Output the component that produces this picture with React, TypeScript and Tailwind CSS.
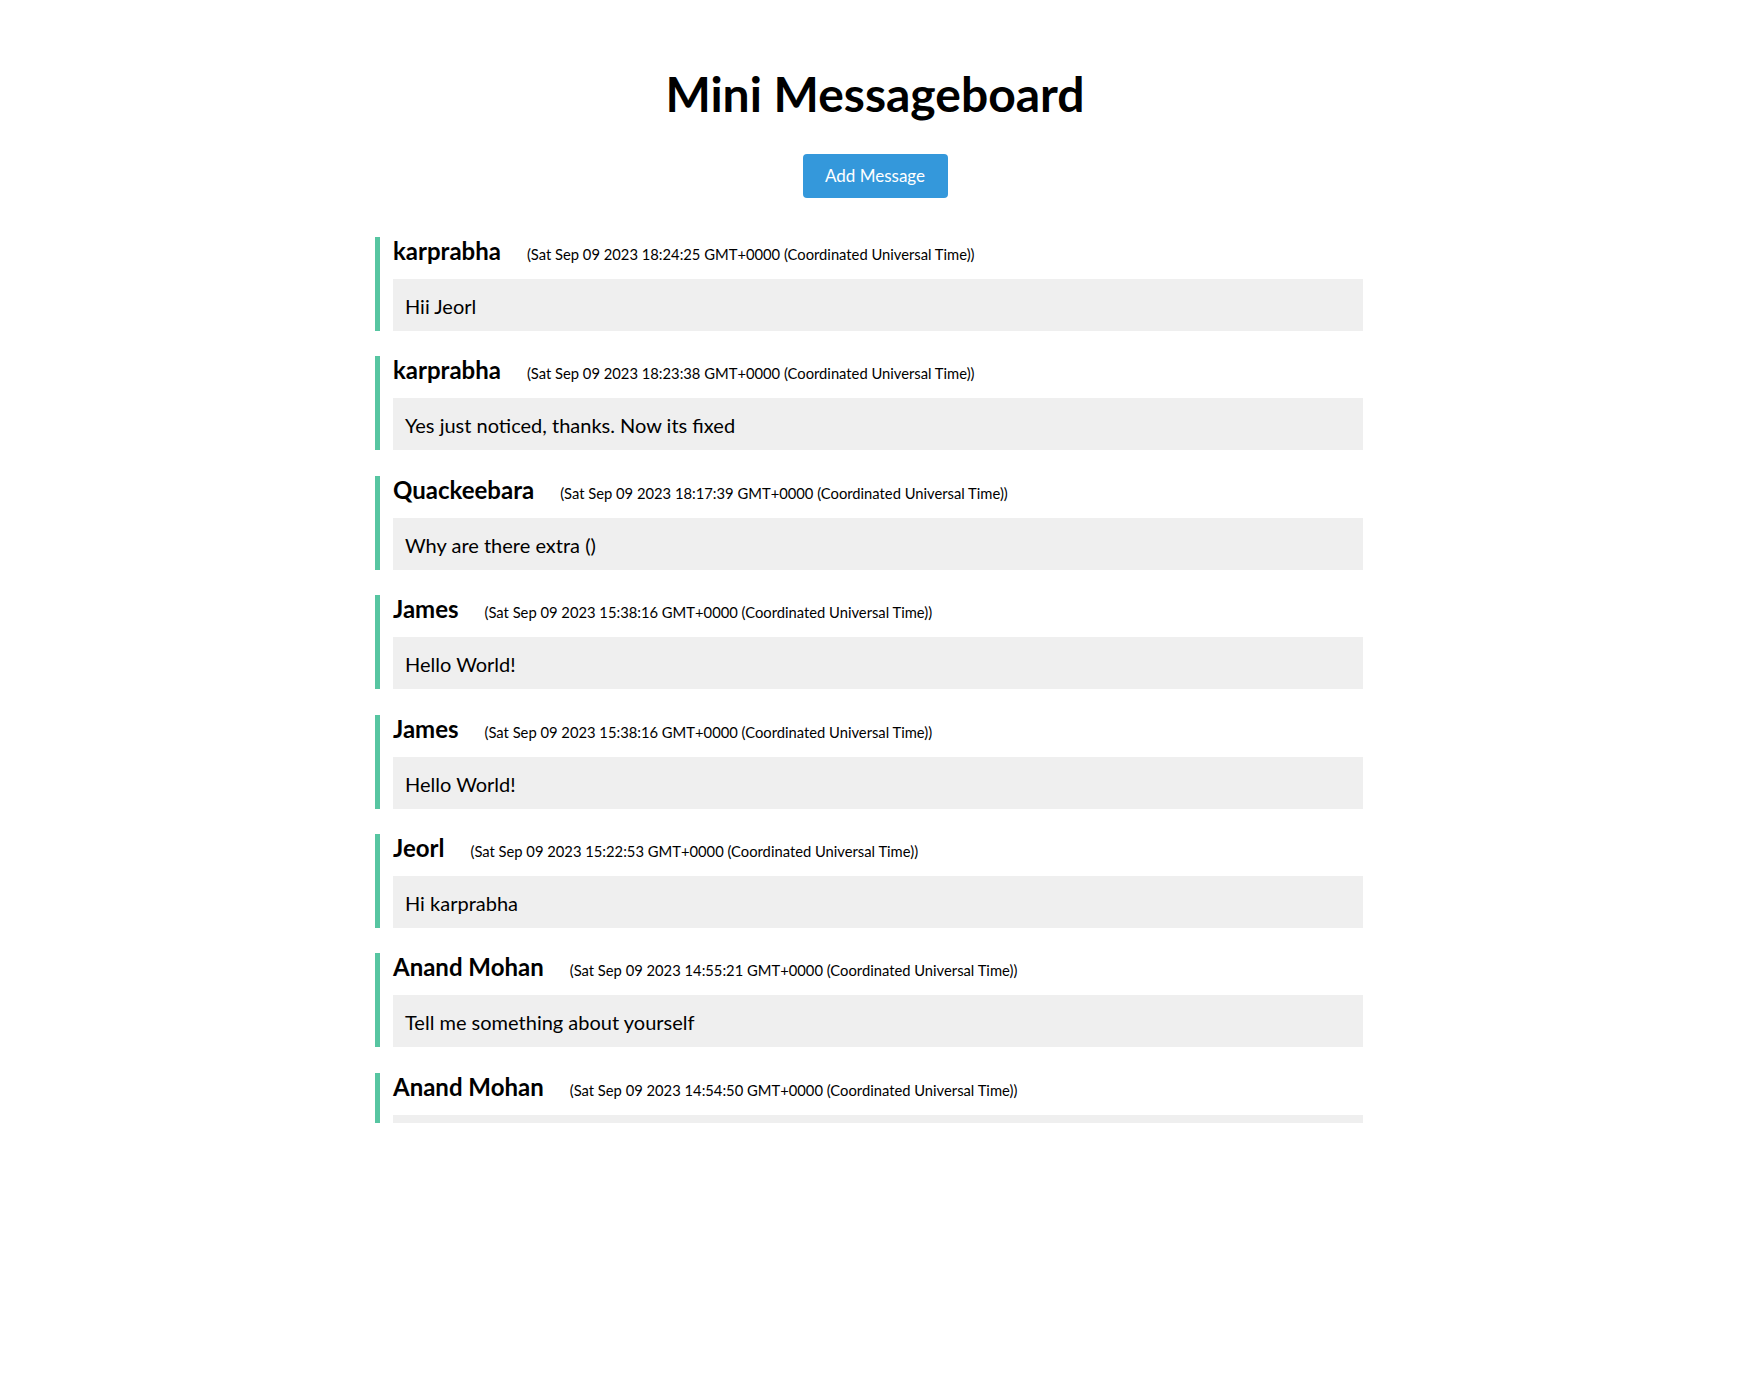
type Message = {
    user: string;
    time: string;
    text: string;
};

const messages: Message[] = [
    { user: 'karprabha', time: '18:24:25', text: 'Hii Jeorl' },
    { user: 'karprabha', time: '18:23:38', text: 'Yes just noticed, thanks. Now its fixed' },
    { user: 'Quackeebara', time: '18:17:39', text: 'Why are there extra ()' },
    { user: 'James', time: '15:38:16', text: 'Hello World!' },
    { user: 'James', time: '15:38:16', text: 'Hello World!' },
    { user: 'Jeorl', time: '15:22:53', text: 'Hi karprabha' },
    { user: 'Anand Mohan', time: '14:55:21', text: 'Tell me something about yourself' },
    // last one is cut off by the list's fixed height, its body never shows
    { user: 'Anand Mohan', time: '14:54:50', text: '' },
];

function MessageItem({ user, time, text }: Message) {
    return (
        <li className="border-l-[5px] border-[#57c5a1] pl-[13px] pr-[12px]">
            <div className="flex h-[42px] items-baseline gap-[26px]">
                <span className="text-[24px] font-bold leading-[28px]">{user}</span>
                <span className="text-[14.75px] leading-[26px]">
                    (Sat Sep 09 2023 {time} GMT+0000 (Coordinated Universal Time))
                </span>
            </div>
            <div className="h-[52px] bg-[#efefef] px-[12px] pt-[13px] text-[20px] leading-[28px]">
                {text}
            </div>
        </li>
    );
}

export default function App() {
    return (
        <div className="min-h-screen bg-white font-['Lato','Noto_Sans',sans-serif] text-black">
            <div className="mx-auto w-[1000px] pt-[70px]">
                <h1 className="text-center text-[48px] font-bold leading-[48px]">
                    Mini Messageboard
                </h1>
                <div className="mt-[36px] flex justify-center">
                    <button
                        type="button"
                        className="h-[44px] w-[145px] rounded-[4px] bg-[#3498db] text-[17px] text-white"
                    >
                        Add Message
                    </button>
                </div>
                <ul className="mt-[39px] flex h-[886px] flex-col gap-[25.4px] overflow-hidden">
                    {messages.map((m, i) => (
                        <MessageItem key={i} {...m} />
                    ))}
                </ul>
            </div>
        </div>
    );
}
